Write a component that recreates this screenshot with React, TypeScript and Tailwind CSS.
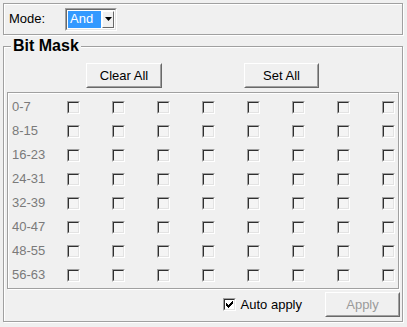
import React from 'react';

const rows = ['0-7', '8-15', '16-23', '24-31', '32-39', '40-47', '48-55', '56-63'];

function CheckBox({ checked = false, white = false }: { checked?: boolean; white?: boolean }) {
  return (
    <div className="w-[13px] h-[13px] shrink-0 border border-t-[#a0a0a0] border-l-[#a0a0a0] border-b-white border-r-white">
      <div
        className={`w-full h-full border border-t-[#303030] border-l-[#303030] border-b-[#e3e3e3] border-r-[#e3e3e3] flex items-center justify-center ${
          white ? 'bg-white' : 'bg-[#f4f4f4]'
        }`}
      >
        {checked && (
          <svg width="7" height="7" viewBox="0 0 7 7">
            <path d="M0 2h1v1h1v1h1v-1h1v-1h1v-1h1v-1h1v3h-1v1h-1v1h-1v1h-1v1h-1v-1h-1v-1h-1v-1h-1z" fill="#000" />
          </svg>
        )}
      </div>
    </div>
  );
}

function Button({ label, disabled = false, width }: { label: string; disabled?: boolean; width: string }) {
  return (
    <div className={`${width} h-[25px] shrink-0 border border-t-white border-l-white border-b-[#696969] border-r-[#696969]`}>
      <div
        className={`w-full h-full border border-t-[#f0f0f0] border-l-[#f0f0f0] border-b-[#a0a0a0] border-r-[#a0a0a0] flex items-center justify-center text-[13px] ${
          disabled ? 'text-[#9a9a9a]' : 'text-black'
        }`}
      >
        {label}
      </div>
    </div>
  );
}

export default function App() {
  return (
    <div className="w-[407px] h-[327px] bg-[#f0f0f0] font-['Liberation_Sans',Arial,sans-serif] text-black overflow-hidden pt-[3px]">
      {/* Mode box */}
      <div className="ml-[3px] w-[400px] h-[32px] border border-[#a0a0a0] shadow-[inset_1px_1px_0_#fff,1px_1px_0_#fff] flex items-center pl-[5px]">
        <span className="w-[56px] text-[13px]">Mode:</span>
        <div className="w-[52px] h-[23px] border border-t-[#a0a0a0] border-l-[#a0a0a0] border-b-white border-r-white">
          <div className="w-full h-full border border-t-[#696969] border-l-[#696969] border-b-[#e3e3e3] border-r-[#e3e3e3] bg-white flex items-stretch p-[1px]">
            <div className="w-[33px] bg-[#3399ff] text-white text-[13px] flex items-center pl-[2px]">And</div>
            <div className="ml-[1px] flex-1 border border-t-white border-l-white border-b-[#696969] border-r-[#696969] bg-[#f0f0f0] flex items-center justify-center">
              <svg width="7" height="4" viewBox="0 0 7 4">
                <path d="M0 0h7l-3.5 4z" fill="#000" />
              </svg>
            </div>
          </div>
        </div>
      </div>

      {/* Bit Mask group */}
      <div className="relative mt-[11px] ml-[3px] w-[400px] h-[276px] border border-[#a0a0a0] shadow-[inset_1px_1px_0_#fff,1px_1px_0_#fff]">
        <span className="absolute left-[7px] top-[-10px] px-[2px] bg-[#f0f0f0] font-bold text-[16px] leading-[18px]">
          Bit Mask
        </span>

        <div className="flex pt-[16px] pl-[82px] gap-[82px]">
          <Button label="Clear All" width="w-[76px]" />
          <Button label="Set All" width="w-[75px]" />
        </div>

        <div className="mt-[4px] ml-[3px] w-[392px] h-[197px] border border-[#a0a0a0] shadow-[inset_1px_1px_0_#fff,1px_1px_0_#fff] pt-[2px] pl-[4px]">
          {rows.map((r) => (
            <div key={r} className="h-[24px] flex items-center">
              <span className="w-[55px] shrink-0 text-[13px] text-[#7a7a7a]">{r}</span>
              {Array.from({ length: 8 }).map((_, i) => (
                <div key={i} className={i < 7 ? 'w-[45px] shrink-0' : 'w-[13px] shrink-0'}>
                  <CheckBox />
                </div>
              ))}
            </div>
          ))}
        </div>

        <div className="flex items-center justify-end mt-[3px] pr-[2px]">
          <CheckBox checked white />
          <span className="ml-[5px] mr-[23px] text-[13px]">Auto apply</span>
          <Button label="Apply" disabled width="w-[75px]" />
        </div>
      </div>
    </div>
  );
}
